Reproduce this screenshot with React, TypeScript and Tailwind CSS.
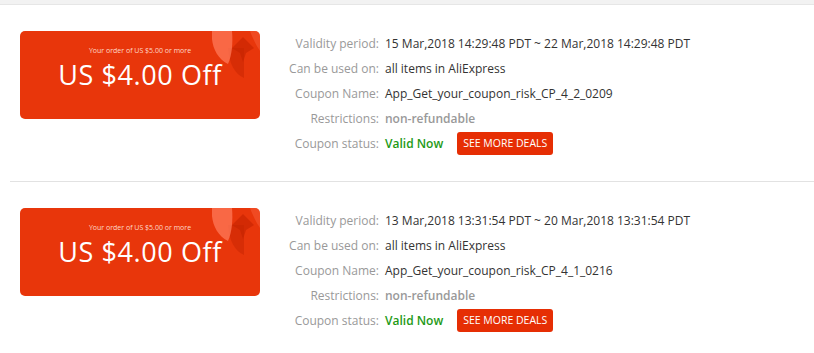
import React from "react";

type Coupon = {
  validity: string;
  name: string;
};

const coupons: Coupon[] = [
  {
    validity: "15 Mar,2018 14:29:48 PDT ~ 22 Mar,2018 14:29:48 PDT",
    name: "App_Get_your_coupon_risk_CP_4_2_0209",
  },
  {
    validity: "13 Mar,2018 13:31:54 PDT ~ 20 Mar,2018 13:31:54 PDT",
    name: "App_Get_your_coupon_risk_CP_4_1_0216",
  },
];

function Deco() {
  return (
    <svg
      className="absolute left-[190px] top-0"
      width="50"
      height="60"
      viewBox="0 0 50 60"
    >
      <path d="M18 17 H34 V47 C25 43 19 33 18 17 Z" fill="#c42300" fillOpacity="0.45" />
      <path d="M2 0 H22 C23 12 22 24 18 33 C8 28 3 18 2 8 Z" fill="#ff7a5a" fillOpacity="0.75" />
      <path d="M33 6 L44 17 L36 22 L33 31 L30 22 L22 17 Z" fill="#c42300" fillOpacity="0.6" />
      <path d="M40 0 H50 V20 C46 14 43 8 40 0 Z" fill="#ff6f4d" fillOpacity="0.35" />
    </svg>
  );
}

function Row({ label, children }: { label: string; children: React.ReactNode }) {
  return (
    <div className="flex h-[25px] items-center">
      <div className="w-[109px] shrink-0 text-right text-[#999]">{label}</div>
      <div className="ml-[6px] flex items-center">{children}</div>
    </div>
  );
}

function Item({ c }: { c: Coupon }) {
  return (
    <div className="ml-[10px] flex border-b border-[#e2e2e2] pb-[25px] pt-[26px]">
      <div className="relative ml-[10px] flex h-[88px] w-[240px] shrink-0 flex-col items-center overflow-hidden rounded-[5px] bg-[#e8360b]">
        <Deco />
        <div className="relative mt-[15px] text-[7px] leading-[10px] text-[#ffd9c9]">
          Your order of US $5.00 or more
        </div>
        <div className="relative text-[27px] leading-[37px] tracking-[0.6px] text-white">
          US $4.00 Off
        </div>
      </div>
      <div className="ml-[10px] flex flex-col text-[12px]">
        <Row label="Validity period:">
          <span className="text-[#333]">{c.validity}</span>
        </Row>
        <Row label="Can be used on:">
          <span className="text-[#333]">all items in AliExpress</span>
        </Row>
        <Row label="Coupon Name:">
          <span className="text-[#333]">{c.name}</span>
        </Row>
        <Row label="Restrictions:">
          <span className="font-semibold text-[#999]">non-refundable</span>
        </Row>
        <Row label="Coupon status:">
          <span className="font-semibold text-[#1e9a16]">Valid Now</span>
          <button className="ml-[14px] h-[23px] w-[96px] rounded-[3px] bg-[#e62e04] text-[10.5px] text-white">
            SEE MORE DEALS
          </button>
        </Row>
      </div>
    </div>
  );
}

export default function App() {
  return (
    <div
      className="min-h-[353px] w-[814px] bg-white"
      style={{ fontFamily: '"Open Sans", sans-serif' }}
    >
      <div className="h-[5px] border-b border-[#e6e6e6] bg-[#f2f2f2]" />
      {coupons.map((c, i) => (
        <Item key={i} c={c} />
      ))}
    </div>
  );
}
